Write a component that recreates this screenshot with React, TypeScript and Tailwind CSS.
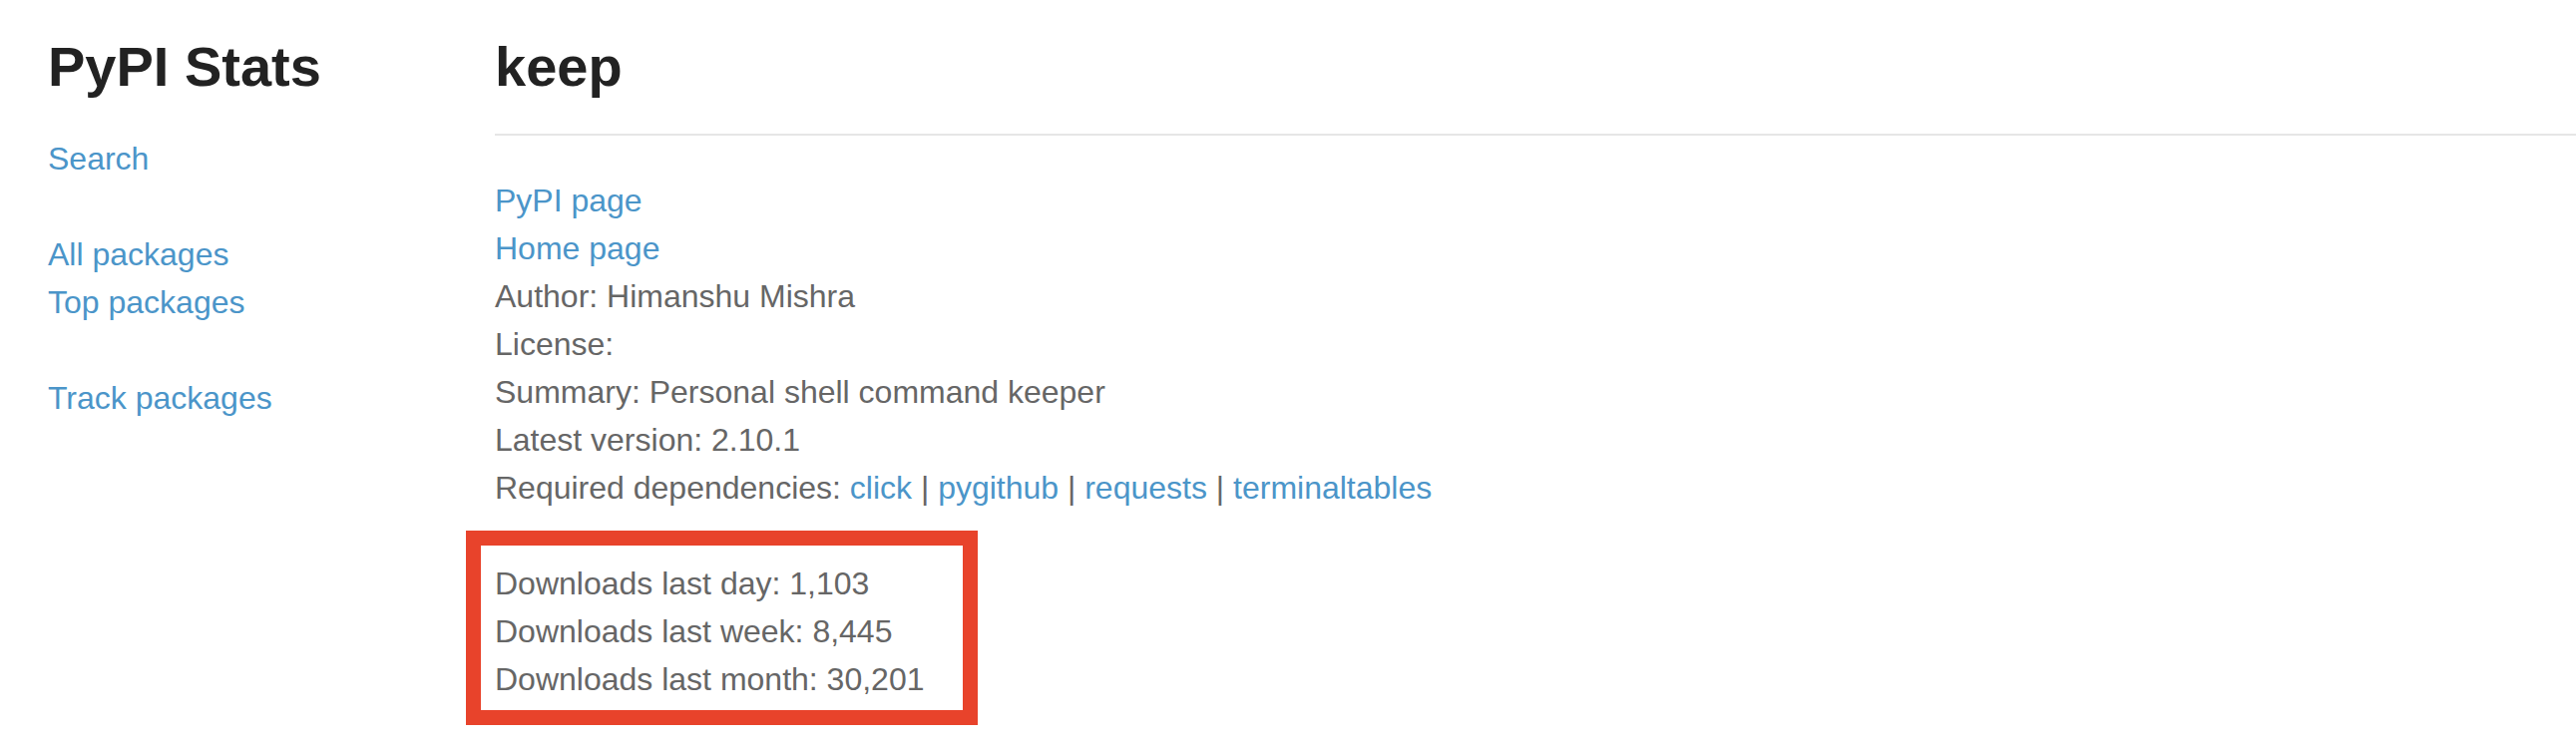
const deps = ['click', 'pygithub', 'requests', 'terminaltables'];

function Sidebar() {
  return (
    <div className="w-[496px] shrink-0 pl-[48px]">
      <h1 className="mt-[36px] text-[56px] leading-[62px] font-bold text-[#222]">PyPI Stats</h1>
      <div className="mt-[37px]">
        <a href="#" className="block text-[#4b95c9]">Search</a>
      </div>
      <div className="mt-[48px]">
        <a href="#" className="block text-[#4b95c9]">All packages</a>
        <a href="#" className="block text-[#4b95c9]">Top packages</a>
      </div>
      <div className="mt-[48px]">
        <a href="#" className="block text-[#4b95c9]">Track packages</a>
      </div>
    </div>
  );
}

export default function App() {
  return (
    <div className="flex min-h-[750px] bg-white text-[32px] leading-[48px] text-[#666] font-['Liberation_Sans',Arial,sans-serif]">
      <Sidebar />

      <div className="flex-1">
        <h1 className="mt-[36px] text-[56px] leading-[62px] font-bold text-[#222]">keep</h1>
        <div className="mt-[36px] h-[2px] bg-[#e6e6e6]" />

        <div className="mt-[41px]">
          <a href="#" className="block text-[#4b95c9]">PyPI page</a>
          <a href="#" className="block text-[#4b95c9]">Home page</a>
          <p>Author: Himanshu Mishra</p>
          <p>License:</p>
          <p>Summary: Personal shell command keeper</p>
          <p>Latest version: 2.10.1</p>
          <p>
            Required dependencies:{' '}
            {deps.map((d, i) => (
              <span key={d}>
                {i > 0 && ' | '}
                <a href="#" className="text-[#4b95c9]">{d}</a>
              </span>
            ))}
          </p>
        </div>

        {/* downloads, with the red annotation box over it */}
        <div className="relative mt-[48px] w-fit">
          <div className="absolute -left-[29px] -top-[29px] w-[513px] h-[195px] border-[15px] border-[#e8432b]" />
          <p>Downloads last day: 1,103</p>
          <p>Downloads last week: 8,445</p>
          <p>Downloads last month: 30,201</p>
        </div>
      </div>
    </div>
  );
}
